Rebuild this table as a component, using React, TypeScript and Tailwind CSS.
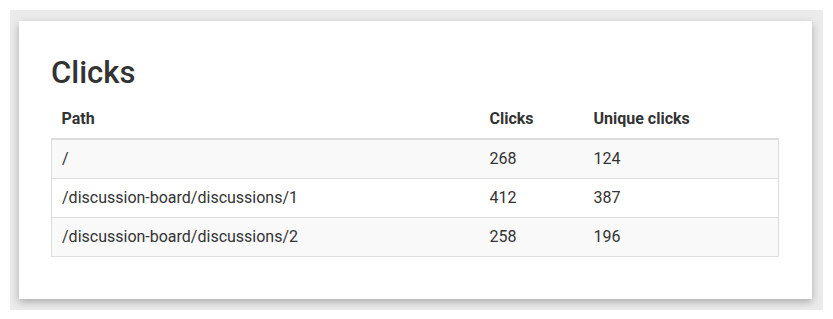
import React from "react";

interface ClickRow {
  path: string;
  clicks: number;
  unique: number;
}

const rows: ClickRow[] = [
  { path: "/", clicks: 268, unique: 124 },
  { path: "/discussion-board/discussions/1", clicks: 412, unique: 387 },
  { path: "/discussion-board/discussions/2", clicks: 258, unique: 196 },
];

const App: React.FC = () => {
  return (
    <div className="bg-white p-[10px] font-['Roboto',sans-serif] text-[#333]">
      <div className="bg-[#ebebeb] pt-[11px] pl-[9px] pr-[11px] pb-[11px]">
        <div className="bg-white shadow-[0_3px_8px_rgba(0,0,0,0.28)] pl-[32px] pr-[33px] pt-[34px] pb-[42px]">
          <h1 className="text-[31px] font-medium leading-[36px] mb-[9px]">Clicks</h1>
          <table className="w-full border-collapse text-[16px]">
            <thead>
              <tr className="border-b-2 border-[#ddd]">
                <th className="w-[428px] px-[10px] py-[8px] text-left font-bold leading-[22px]">Path</th>
                <th className="w-[104px] px-[10px] py-[8px] text-left font-bold leading-[22px]">Clicks</th>
                <th className="px-[10px] py-[8px] text-left font-bold leading-[22px]">Unique clicks</th>
              </tr>
            </thead>
            <tbody className="border border-[#ddd]">
              {rows.map((row, i) => (
                <tr
                  key={row.path}
                  className={`border-t border-[#ddd] ${i % 2 === 0 ? "bg-[#f9f9f9]" : "bg-white"}`}
                >
                  <td className="px-[10px] py-[8px] leading-[22px]">{row.path}</td>
                  <td className="px-[10px] py-[8px] leading-[22px]">{row.clicks}</td>
                  <td className="px-[10px] py-[8px] leading-[22px]">{row.unique}</td>
                </tr>
              ))}
            </tbody>
          </table>
        </div>
      </div>
    </div>
  );
};

export default App;
